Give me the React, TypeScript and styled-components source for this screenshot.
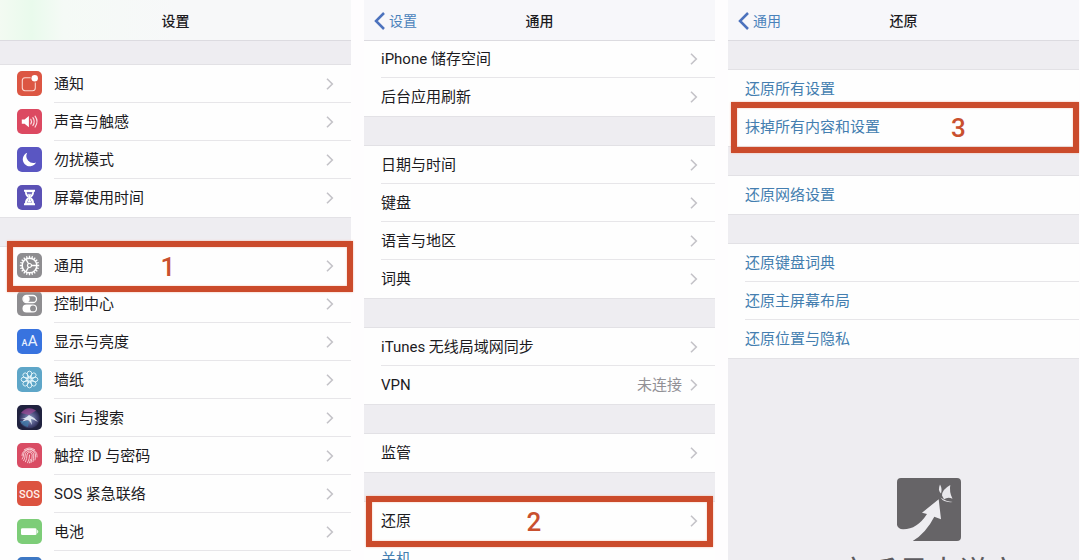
import React from "react";
import styled, { createGlobalStyle } from "styled-components";

const GlobalStyle = createGlobalStyle`
  *, *::before, *::after { box-sizing: border-box; }
  body {
    margin: 0;
    background: #fefdfe;
    color: #1c1b1e;
    font-family: Roboto, "Noto Sans CJK SC", sans-serif;
    font-size: 15px;
    line-height: 20px;
  }
  button { font: inherit; color: inherit; border: 0; background: none; padding: 0; cursor: pointer; }
`;

const Page = styled.main`
  display: grid;
  grid-template-columns: repeat(3, minmax(0, 1fr));
  column-gap: 13px;
  padding-right: 1px;
  height: 100vh;
  overflow: hidden;
`;

const Screen = styled.section`
  display: flex;
  flex-direction: column;
  background: #eeedf1;
`;

const NavBar = styled.header<{ $tinted?: boolean }>`
  position: relative;
  display: grid;
  grid-template-columns: 1fr auto 1fr;
  align-items: center;
  flex: none;
  height: 40px;
  padding: 2px 10px 0;
  box-shadow: 0 1px #dcdbe0;
  background: ${(p) =>
    p.$tinted
      ? "linear-gradient(90deg, #f3faf2 0%, #e9faec 9%, #f5faf6 18%, #f7f8f9 50%)"
      : "#f7f7fa"};
`;

const Title = styled.h1`
  grid-column: 2;
  margin: 0;
  font-size: 14px;
  line-height: 20px;
  font-weight: 500;
`;

const BackButton = styled.button`
  display: flex;
  align-items: center;
  gap: 4px;
  justify-self: start;
  && { color: #4a82bb; }
  font-size: 14px;
`;

const Groups = styled.div<{ $first: number }>`
  display: flex;
  flex-direction: column;
  gap: 30px;
  padding-top: ${(p) => p.$first}px;
`;

const Group = styled.ul`
  list-style: none;
  margin: 0;
  padding: 0;
  background: #fefefe;
  box-shadow: 0 -1px #e2e1e5, 0 1px #e3e2e6;
`;

const Item = styled.li`
  position: relative;
`;

const RowButton = styled.button<{ $link?: boolean }>`
  display: flex;
  align-items: center;
  gap: 12px;
  width: 100%;
  height: 38px;
  padding-left: 17px;
  text-align: left;
  && { color: ${(p) => (p.$link ? "#447eb0" : "#1c1b1e")}; }
`;

const RowBody = styled.span<{ $line: boolean }>`
  flex: 1;
  display: flex;
  align-items: center;
  gap: 8px;
  height: 38px;
  padding-top: 1px;
  padding-right: 17px;
  border-bottom: 1px solid ${(p) => (p.$line ? "#e7e6e9" : "transparent")};
`;

const Label = styled.span`
  flex: 1;
`;

const Value = styled.span`
  color: #929196;
`;

const Tile = styled.svg`
  flex: none;
  width: 25px;
  height: 25px;
  margin-bottom: 2px;
  border-radius: 5px;
  font-family: Roboto, sans-serif;
`;

const Highlight = styled.span<{ $left: number; $right: number; $mark: number }>`
  position: absolute;
  z-index: 1;
  top: -6px;
  bottom: -7px;
  left: ${(p) => p.$left}px;
  right: ${(p) => p.$right}px;
  display: flex;
  align-items: center;
  padding-left: ${(p) => p.$mark}%;
  border: 6px solid #cb4b2b;
  box-shadow: 0 0 2px #f6b9a5, inset 0 0 2px #f6b9a5;
  color: #c9502f;
  font-size: 26px;
  line-height: 30px;
  font-weight: 500;
  pointer-events: none;
`;

const Watermark = styled.footer`
  display: flex;
  flex-direction: column;
  align-items: center;
  gap: 10px;
  padding: 120px 0 0 50px;
  color: #5d5b60;
  font-size: 30px;
  line-height: 40px;
  white-space: nowrap;
`;

const Chevron = () => (
  <svg width="8" height="12" viewBox="0 0 8 12" fill="none" stroke="#c4c3c8" strokeWidth="1.6" aria-hidden="true">
    <path d="M1 .8 6.3 6 1 11.2" />
  </svg>
);

const BackChevron = () => (
  <svg width="11" height="18" viewBox="0 0 11 18" fill="none" stroke="#4c72bd" strokeWidth="2.5" aria-hidden="true">
    <path d="M10 1 2 9l8 8" />
  </svg>
);

type IconName =
  | "notice" | "sound" | "moon" | "hourglass" | "gear" | "toggles" | "display"
  | "flower" | "siri" | "touch" | "sos" | "battery" | "privacy";

const tileColor: Record<IconName, string> = {
  notice: "#dc5643",
  sound: "#dc4961",
  moon: "#5a56c2",
  hourglass: "#5b51b5",
  gear: "#8e8d90",
  toggles: "#8e8d90",
  display: "#3873df",
  flower: "#5ea6c8",
  siri: "#20223f",
  touch: "#d94c64",
  sos: "#dc5340",
  battery: "#7dcd78",
  privacy: "#3d78c4",
};

const around = (n: number) => Array.from({ length: n }, (_, i) => (360 / n) * i);

const glyph: Record<IconName, React.ReactNode> = {
  notice: (
    <>
      <path d="M13.600 6.700H8A2.800 2.800 0 0 0 5.300 9.500V17A2.800 2.800 0 0 0 8 19.700h7.500A2.800 2.800 0 0 0 18.300 17v-5.600" fill="none" stroke="#fbd9d2" strokeWidth="1.100" />
      <circle cx="17.700" cy="7.300" r="3.200" fill="#fff" />
    </>
  ),
  sound: (
    <>
      <path d="M4.800 10.400h2.800l4.300-3.400v11.200l-4.300-3.400H4.800z" fill="#fff" />
      <g fill="none" stroke="#fbdce1" strokeWidth="1.200" strokeLinecap="round">
        <path d="M13.800 10.300q1.500 2.300 0 4.600" />
        <path d="M15.900 8.700q2.700 3.900 0 7.800" />
        <path d="M18.100 7.200q3.800 5.400 0 10.800" />
      </g>
    </>
  ),
  moon: <path d="M10.200 5.800A7 7 0 1 0 19 15.500 7 7 0 0 1 10.200 5.800z" fill="#fff" />,
  hourglass: (
    <>
      <path d="M7 4.800h11v2h-1c0 3-1 4.300-2.900 5.700 1.900 1.400 2.900 2.700 2.900 5.700h1v2H7v-2h1c0-3 1-4.300 2.900-5.700C9 11.100 8 9.800 8 6.800H7z" fill="#fff" />
      <path d="M9.600 7h5.800q-.2 2.700-2.300 4.400v2.700l2.200 3.600H9.700l2.200-3.600v-2.700Q9.800 9.700 9.600 7z" fill="#7b72c4" />
      <path d="M10.600 9.300h3.800l-1.400 2.200v3l1.700 3h-4.400l1.700-3v-3z" fill="#fff" />
    </>
  ),
  gear: (
    <g transform="translate(12.500 12.500)" fill="none" stroke="#fff">
      <circle r="7.300" strokeWidth="1.500" />
      <circle r="2" strokeWidth="1.200" />
      {around(20).map((a) => (
        <path key={a} d="M0-7.500V-9.700" strokeWidth="1.300" transform={`rotate(${a})`} />
      ))}
      {around(3).map((a) => (
        <path key={a} d="M1.900 0H7" strokeWidth="1.300" transform={`rotate(${a})`} />
      ))}
    </g>
  ),
  toggles: (
    <>
      <rect x="6" y="4.500" width="13.500" height="7" rx="3.500" fill="none" stroke="#fff" strokeWidth="1.300" />
      <circle cx="9.500" cy="8" r="3.200" fill="#fff" />
      <rect x="5.500" y="13.400" width="14.500" height="8" rx="4" fill="#fff" />
      <circle cx="16" cy="17.400" r="2.900" fill="#8e8d90" />
    </>
  ),
  display: (
    <g fill="#e9f1ff">
      <text x="4.500" y="17" fontSize="9" fontWeight="500">A</text>
      <text x="10.800" y="17" fontSize="15">A</text>
    </g>
  ),
  flower: (
    <g transform="translate(12.500 12.500)" fill="none" stroke="#e5f6fb" strokeWidth=".9">
      {around(8).map((a) => (
        <ellipse key={a} cy="-5.600" rx="2.300" ry="2.800" transform={`rotate(${a})`} />
      ))}
      {around(8).map((a) => (
        <path key={a} d="M0-.8V-4" transform={`rotate(${a + 22})`} />
      ))}
      <circle r="2.300" />
    </g>
  ),
  siri: (
    <>
      <defs>
        <radialGradient id="siriGlow" cx=".5" cy=".55" r=".5">
          <stop offset="0" stopColor="#8fa6c4" />
          <stop offset=".5" stopColor="#5b608f" />
          <stop offset=".85" stopColor="#363763" />
          <stop offset="1" stopColor="#20223f" />
        </radialGradient>
      </defs>
      <circle cx="12.500" cy="12.500" r="10.800" fill="url(#siriGlow)" />
      <path d="M4 8Q10 0 19 5.500L12 10z" fill="#a44a98" opacity=".65" />
      <path d="M3 14q5 0 9-4 5 2 9 7-5-3-7-3l1 6q-2-4-4-5-4 0-7 4 2-4 4-5z" fill="#e7edf7" opacity=".9" />
      <path d="M3 16q2 5 8 6l1-6z" fill="#3f7fae" opacity=".7" />
    </>
  ),
  touch: (
    <g fill="none" stroke="#fad5db" strokeWidth=".9" strokeLinecap="round">
      <path d="M7.200 6.800q5.300-3.800 10.600 0" />
      <path d="M5 12.500q0-2.200 1.500-3.800 6-5.200 12 0 1.500 1.600 1.500 3.800V14" />
      <path d="M5.200 16q1.300-2 1.300-4a6 5.400 0 0 1 12 0q0 3-.5 5" />
      <path d="M6.700 17.600Q8.200 15 8.200 12a4.300 4 0 0 1 8.600 0q0 3.500-.8 6.600" />
      <path d="M8.500 18.800Q10 15.500 10 12a2.600 2.600 0 0 1 5.200 0q0 4-1.200 7.700" />
      <path d="M10.600 19.800Q12.600 16 12.600 12M12.400 20q.8-2 1-3.500" />
    </g>
  ),
  sos: (
    <text x="12.500" y="16.500" fontSize="11" fontWeight="500" textAnchor="middle" fill="#fff0ed">SOS</text>
  ),
  battery: (
    <>
      <rect x="4" y="9.300" width="15.500" height="6.800" rx="1.300" fill="#fff" />
      <path d="M20.300 11.200q1.300 1.500 0 3z" fill="#fff" stroke="#fff" strokeWidth=".5" />
    </>
  ),
  privacy: <path d="M10 22v-9a1 1 0 0 1 2 0v5l5 1v3z" fill="#fff" />,
};

const Icon = ({ name }: { name: IconName }) => (
  <Tile viewBox="0 0 25 25" aria-hidden="true">
    <rect width="25" height="25" fill={tileColor[name]} />
    {glyph[name]}
  </Tile>
);

type Mark = { step: string; left: number; right: number; at: number };
type Entry = { label: string; icon?: IconName; value?: string; link?: boolean; mark?: Mark };

const settings: Entry[][] = [
  [
    { label: "通知", icon: "notice" },
    { label: "声音与触感", icon: "sound" },
    { label: "勿扰模式", icon: "moon" },
    { label: "屏幕使用时间", icon: "hourglass" },
  ],
  [
    { label: "通用", icon: "gear", mark: { step: "1", left: 7, right: -2, at: 42 } },
    { label: "控制中心", icon: "toggles" },
    { label: "显示与亮度", icon: "display" },
    { label: "墙纸", icon: "flower" },
    { label: "Siri 与搜索", icon: "siri" },
    { label: "触控 ID 与密码", icon: "touch" },
    { label: "SOS 紧急联络", icon: "sos" },
    { label: "电池", icon: "battery" },
    { label: "隐私", icon: "privacy" },
  ],
];

const general: Entry[][] = [
  [{ label: "iPhone 储存空间" }, { label: "后台应用刷新" }],
  [{ label: "日期与时间" }, { label: "键盘" }, { label: "语言与地区" }, { label: "词典" }],
  [{ label: "iTunes 无线局域网同步" }, { label: "VPN", value: "未连接" }],
  [{ label: "监管" }],
  [
    { label: "还原", mark: { step: "2", left: 2, right: 2, at: 44 } },
    { label: "关机", link: true },
  ],
];

const reset: Entry[][] = [
  [
    { label: "还原所有设置", link: true },
    { label: "抹掉所有内容和设置", link: true, mark: { step: "3", left: 3, right: 0, at: 61 } },
  ],
  [{ label: "还原网络设置", link: true }],
  [
    { label: "还原键盘词典", link: true },
    { label: "还原主屏幕布局", link: true },
    { label: "还原位置与隐私", link: true },
  ],
];

const List = ({ groups, first }: { groups: Entry[][]; first: number }) => (
  <Groups $first={first}>
    {groups.map((rows, g) => (
      <Group key={g}>
        {rows.map((row, i) => (
          <Item key={row.label}>
            <RowButton type="button" $link={row.link}>
              {row.icon && <Icon name={row.icon} />}
              <RowBody $line={i < rows.length - 1 && !row.mark}>
                <Label>{row.label}</Label>
                {row.value && <Value>{row.value}</Value>}
                {!row.link && <Chevron />}
              </RowBody>
            </RowButton>
            {row.mark && (
              <Highlight $left={row.mark.left} $right={row.mark.right} $mark={row.mark.at}>
                {row.mark.step}
              </Highlight>
            )}
          </Item>
        ))}
      </Group>
    ))}
  </Groups>
);

const Back = ({ to }: { to: string }) => (
  <BackButton type="button">
    <BackChevron />
    {to}
  </BackButton>
);

const ArrowLogo = () => (
  <svg width="64" height="64" viewBox="0 0 64 64" aria-hidden="true">
    <path
      d="M4 0H60Q64 0 64 4V59Q64 63 60 63H15.700Q29 55 37.300 38.700L44 41.300 41.700 21.300 25 34.700 30 36Q20 51.500 6 51.300 1 51 0 47V4Q0 0 4 0Z"
      fill="#666467"
    />
    <g fill="#e9e8ec">
      <path d="M53.300 7Q45 11.500 45 17.500L47 21.300Q51 18.500 55.500 20.800 52 14 53.300 7Z" />
      <path d="M43 6.500Q40.500 12 44 15.500 45.500 11 43 6.500Z" />
      <path d="M43.500 19.500Q47 25 55.700 24 49 23.500 43.500 19.500Z" />
    </g>
  </svg>
);

export default function App() {
  return (
    <>
      <GlobalStyle />
      <Page>
        <Screen>
          <NavBar $tinted>
            <Title>设置</Title>
          </NavBar>
          <List groups={settings} first={25} />
        </Screen>
        <Screen>
          <NavBar>
            <Back to="设置" />
            <Title>通用</Title>
          </NavBar>
          <List groups={general} first={0} />
        </Screen>
        <Screen>
          <NavBar>
            <Back to="通用" />
            <Title>还原</Title>
          </NavBar>
          <List groups={reset} first={30} />
          <Watermark>
            <ArrowLogo />
            <span>客禾易大说家</span>
          </Watermark>
        </Screen>
      </Page>
    </>
  );
}
